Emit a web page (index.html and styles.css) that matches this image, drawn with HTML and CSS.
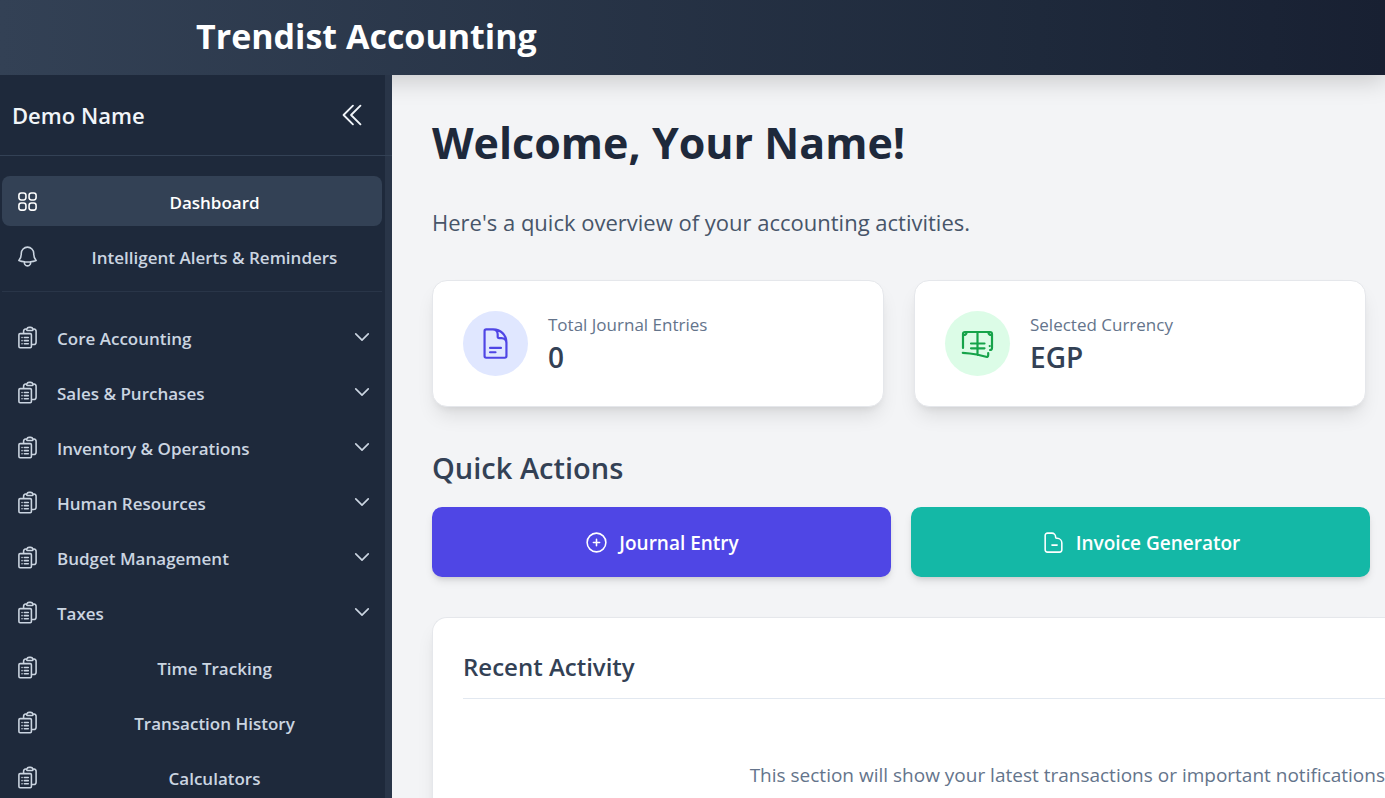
FILE: index.html
```html
<!DOCTYPE html>
<html lang="en">
<head>
<meta charset="utf-8">
<title>Trendist Accounting</title>
<link rel="stylesheet" href="styles.css">
</head>
<body>
<svg class="sprite" aria-hidden="true">
  <symbol id="clipboard" viewBox="0 0 24 24"><path d="M9 12h3.75M9 15h3.75M9 18h3.75m3 .75H18a2.25 2.25 0 0 0 2.25-2.25V6.108c0-1.135-.845-2.098-1.976-2.192a48.424 48.424 0 0 0-1.123-.08m-5.801 0c-.065.21-.1.433-.1.664 0 .414.336.75.75.75h4.5a.75.75 0 0 0 .75-.75 2.25 2.25 0 0 0-.1-.664m-5.8 0A2.251 2.251 0 0 1 13.5 2.25H15c1.012 0 1.867.668 2.15 1.586m-5.8 0c-.376.023-.75.05-1.124.08C9.095 4.01 8.25 4.973 8.25 6.108V8.25m0 0H4.875c-.621 0-1.125.504-1.125 1.125v11.25c0 .621.504 1.125 1.125 1.125h9.75c.621 0 1.125-.504 1.125-1.125V9.375c0-.621-.504-1.125-1.125-1.125H8.25ZM6.75 12h.008v.008H6.75V12Zm0 3h.008v.008H6.75V15Zm0 3h.008v.008H6.75V18Z"/></symbol>
  <symbol id="chevron" viewBox="0 0 24 24"><path d="m19.5 8.25-7.5 7.5-7.5-7.5"/></symbol>
</svg>
<header class="topbar"><h1 class="brand">Trendist Accounting</h1></header>
<div class="shell">
  <aside class="sidebar">
    <div class="profile">
      <span class="profile-name">Demo Name</span>
      <button class="collapse" type="button" aria-label="Collapse sidebar"><svg class="icon icon-lg" viewBox="0 0 24 24"><path d="m18.75 19.5-7.5-7.5 7.5-7.5m-6 15L5.25 12l7.5-7.5"/></svg></button>
    </div>
    <nav class="nav">
      <div class="nav-top">
        <a class="item link active" href="#"><svg class="icon" viewBox="0 0 24 24"><path d="M3.75 6A2.25 2.25 0 0 1 6 3.75h2.25A2.25 2.25 0 0 1 10.5 6v2.25a2.25 2.25 0 0 1-2.25 2.25H6a2.25 2.25 0 0 1-2.25-2.25V6ZM3.75 15.75A2.25 2.25 0 0 1 6 13.5h2.25a2.25 2.25 0 0 1 2.25 2.25V18a2.25 2.25 0 0 1-2.25 2.25H6A2.25 2.25 0 0 1 3.75 18v-2.25ZM13.5 6a2.25 2.25 0 0 1 2.25-2.25H18A2.25 2.25 0 0 1 20.25 6v2.25A2.25 2.25 0 0 1 18 10.5h-2.25a2.25 2.25 0 0 1-2.25-2.25V6ZM13.5 15.75a2.25 2.25 0 0 1 2.25-2.25H18a2.25 2.25 0 0 1 2.25 2.25V18A2.25 2.25 0 0 1 18 20.25h-2.25A2.25 2.25 0 0 1 13.5 18v-2.25Z"/></svg><span class="label">Dashboard</span></a>
        <a class="item link" href="#"><svg class="icon" viewBox="0 0 24 24"><path d="M14.857 17.082a23.848 23.848 0 0 0 5.454-1.31A8.967 8.967 0 0 1 18 9.75V9A6 6 0 0 0 6 9v.75a8.967 8.967 0 0 1-2.312 6.022c1.733.64 3.56 1.085 5.455 1.31m5.714 0a24.255 24.255 0 0 1-5.714 0m5.714 0a3 3 0 1 1-5.714 0"/></svg><span class="label">Intelligent Alerts &amp; Reminders</span></a>
      </div>
      <div class="nav-list">
        <button class="item" type="button"><svg class="icon"><use href="#clipboard"/></svg><span class="label">Core Accounting</span><svg class="icon icon-sm"><use href="#chevron"/></svg></button>
        <button class="item" type="button"><svg class="icon"><use href="#clipboard"/></svg><span class="label">Sales &amp; Purchases</span><svg class="icon icon-sm"><use href="#chevron"/></svg></button>
        <button class="item" type="button"><svg class="icon"><use href="#clipboard"/></svg><span class="label">Inventory &amp; Operations</span><svg class="icon icon-sm"><use href="#chevron"/></svg></button>
        <button class="item" type="button"><svg class="icon"><use href="#clipboard"/></svg><span class="label">Human Resources</span><svg class="icon icon-sm"><use href="#chevron"/></svg></button>
        <button class="item" type="button"><svg class="icon"><use href="#clipboard"/></svg><span class="label">Budget Management</span><svg class="icon icon-sm"><use href="#chevron"/></svg></button>
        <button class="item" type="button"><svg class="icon"><use href="#clipboard"/></svg><span class="label">Taxes</span><svg class="icon icon-sm"><use href="#chevron"/></svg></button>
        <a class="item link" href="#"><svg class="icon"><use href="#clipboard"/></svg><span class="label">Time Tracking</span></a>
        <a class="item link" href="#"><svg class="icon"><use href="#clipboard"/></svg><span class="label">Transaction History</span></a>
        <a class="item link" href="#"><svg class="icon"><use href="#clipboard"/></svg><span class="label">Calculators</span></a>
      </div>
    </nav>
  </aside>
  <main class="main">
    <h2 class="welcome">Welcome, Your Name!</h2>
    <p class="intro">Here's a quick overview of your accounting activities.</p>
    <div class="stats">
      <section class="card stat">
        <span class="badge indigo"><svg class="icon icon-xl" viewBox="0 0 24 24"><path d="M19.5 14.25v-2.625a3.375 3.375 0 0 0-3.375-3.375h-1.5A1.125 1.125 0 0 1 13.5 7.125v-1.5a3.375 3.375 0 0 0-3.375-3.375H8.25m0 12.75h7.5m-7.5 3H12M10.5 2.25H5.625c-.621 0-1.125.504-1.125 1.125v17.25c0 .621.504 1.125 1.125 1.125h12.75c.621 0 1.125-.504 1.125-1.125V11.25a9 9 0 0 0-9-9Z"/></svg></span>
        <div class="stat-body"><p class="stat-label">Total Journal Entries</p><p class="stat-value">0</p></div>
      </section>
      <section class="card stat">
        <span class="badge green"><svg class="icon icon-xl" viewBox="0 0 35 35"><g stroke-width="2.200"><path d="M3 22V8Q3 6 5 6H30Q32 6 32 8V22Q32 24 30 24M4 9Q6 9 6.500 7M28.500 7Q29 9 31 9M29.700 20V20.100M32 19V21M2.800 26.800Q10 27.200 16.700 28.500L26 30.800Q28.200 31.300 28.200 29V27M17.500 6V29M11 17.500H24.500M11 22.300H24.500"/></g></svg></span>
        <div class="stat-body"><p class="stat-label">Selected Currency</p><p class="stat-value">EGP</p></div>
      </section>
    </div>
    <h3 class="section-title">Quick Actions</h3>
    <div class="actions">
      <button class="action primary" type="button"><svg class="icon" viewBox="0 0 24 24"><path d="M12 9v6m3-3H9m12 0a9 9 0 1 1-18 0 9 9 0 0 1 18 0Z"/></svg><span class="action-text">Journal Entry</span></button>
      <button class="action teal" type="button"><svg class="icon" viewBox="0 0 24 24"><path d="M10.500 14.500h5M6.500 3H10.500A3.500 3.500 0 0 1 14 6.500V7Q14 8 15 8H15.500A4.500 4.500 0 0 1 20 12.500V19A2.250 2.250 0 0 1 17.750 21.250H6.250A2.250 2.250 0 0 1 4 19V5.250A2.250 2.250 0 0 1 6.250 3Z"/></svg><span class="action-text">Invoice Generator</span></button>
    </div>
    <section class="card activity">
      <h3 class="activity-title">Recent Activity</h3>
      <p class="activity-text">This section will show your latest transactions or important notifications</p>
    </section>
  </main>
</div>
</body>
</html>
```
FILE: styles.css
```css
* { box-sizing: border-box; }
body {
  margin: 0;
  height: 100vh;
  display: flex;
  flex-direction: column;
  overflow: hidden;
  font-family: "Open Sans", "Noto Sans", sans-serif;
  background: #f3f4f6;
  color: #334155;
}
h1, h2, h3, p { margin: 0; }
button { font: inherit; border: 0; cursor: pointer; }
.sprite { display: none; }
.icon {
  width: 25px;
  height: 25px;
  flex: none;
  fill: none;
  stroke: currentColor;
  stroke-width: 1.5;
  stroke-linecap: round;
  stroke-linejoin: round;
}
.icon-sm { width: 20px; height: 20px; stroke-width: 2; }
.icon-lg { width: 30px; height: 30px; }
.icon-xl { width: 35px; height: 35px; }

.topbar {
  flex: none;
  height: 75px;
  padding-left: 196px;
  display: flex;
  align-items: center;
  position: relative;
  z-index: 1;
  background: linear-gradient(to right, #334155, #1e293b 75%, #182032);
  box-shadow: 0 6px 25px rgba(0, 0, 0, .18);
}
.brand { color: #fff; font-size: 34px; line-height: 48px; font-weight: 700; padding-bottom: 4px; }

.shell { flex: 1; min-height: 0; display: flex; }
.sidebar {
  flex: none;
  width: 392px;
  position: relative;
  z-index: 2;
  background: #1e293b;
  border-right: 7px solid #293548;
  color: #cbd5e1;
}
.profile {
  height: 81px;
  margin-right: -7px;
  padding: 0 25px 0 12px;
  display: flex;
  align-items: center;
  justify-content: space-between;
  border-bottom: 1px solid #334155;
  color: #f1f5f9;
}
.profile-name { font-size: 22px; line-height: 30px; font-weight: 600; }
.collapse { display: flex; padding: 0; background: none; color: inherit; }
.nav { padding: 20px 3px 0 2px; }
.nav-top, .nav-list { display: flex; flex-direction: column; gap: 5px; }
.nav-top { padding-bottom: 10px; border-bottom: 1px solid #293548; }
.nav-list { padding-top: 20px; }
.item {
  height: 50px;
  padding: 0 10px 0 13px;
  display: flex;
  align-items: center;
  gap: 17px;
  border-radius: 8px;
  background: none;
  color: inherit;
  font-size: 17px;
  line-height: 24px;
  font-weight: 600;
  text-decoration: none;
  text-align: left;
}
.label { flex: 1; padding-top: 3px; }
.link .label { text-align: center; }
.active { background: #334155; color: #fff; }

.main { flex: 1; min-width: 0; padding: 40px 0 0 40px; overflow: hidden; }
.welcome { color: #1e293b; font-size: 43px; line-height: 56px; font-weight: 700; }
.intro { margin-top: 34px; color: #475569; font-size: 22px; line-height: 34px; }
.card {
  background: #fff;
  border: 1px solid #e5e7eb;
  border-radius: 15px;
  box-shadow: 0 12px 19px -4px rgba(0, 0, 0, .1), 0 5px 8px -5px rgba(0, 0, 0, .1);
}
.stats { margin: 41px 19px 0 0; display: grid; grid-template-columns: 1fr 1fr; gap: 30px; }
.stat { height: 127px; padding: 0 30px; display: flex; align-items: center; gap: 20px; }
.stat-body { padding-top: 2px; }
.badge { width: 65px; height: 65px; border-radius: 50%; display: grid; place-items: center; }
.indigo { background: #e0e7ff; color: #4f46e5; }
.green { background: #dcfce7; color: #16a34a; }
.stat-label { color: #64748b; font-size: 17px; line-height: 25px; }
.stat-value { font-size: 28px; line-height: 40px; font-weight: 600; }
.section-title { margin-top: 41px; font-size: 29px; line-height: 40px; font-weight: 600; }
.actions { margin: 19px 15px 0 0; display: grid; grid-template-columns: 1fr 1fr; gap: 20px; }
.action {
  height: 70px;
  display: flex;
  align-items: center;
  justify-content: center;
  gap: 10px;
  border-radius: 10px;
  color: #fff;
  font-size: 19px;
  line-height: 28px;
  font-weight: 600;
  box-shadow: 0 5px 8px -1px rgba(0, 0, 0, .1), 0 3px 5px -2px rgba(0, 0, 0, .1);
}
.action-text { padding-top: 2px; }
.primary { background: #4f46e5; }
.teal { background: #14b8a6; }
.activity {
  height: 260px;
  margin-top: 40px;
  padding: 31px 0 0 30px;
  border-right: 0;
  border-radius: 15px 0 0 15px;
}
.activity-title {
  padding-bottom: 14px;
  border-bottom: 1px solid #e2e8f0;
  font-size: 24px;
  line-height: 35px;
  font-weight: 600;
}
.activity-text { padding-top: 62px; text-align: right; white-space: nowrap; color: #64748b; font-size: 19px; line-height: 28px; }
```
